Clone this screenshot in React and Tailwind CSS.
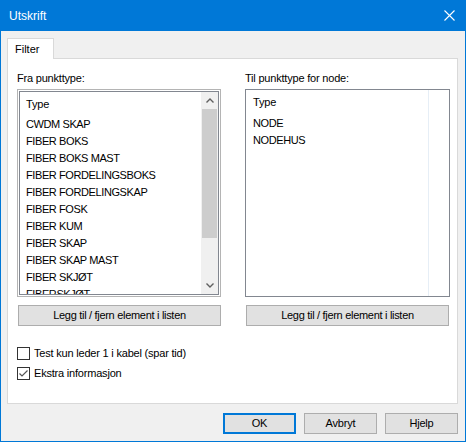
import React from 'react';

const fraTyper = [
  'CWDM SKAP',
  'FIBER BOKS',
  'FIBER BOKS MAST',
  'FIBER FORDELINGSBOKS',
  'FIBER FORDELINGSKAP',
  'FIBER FOSK',
  'FIBER KUM',
  'FIBER SKAP',
  'FIBER SKAP MAST',
  'FIBER SKJØT',
  'FIBERSKJØT',
];

const tilTyper = ['NODE', 'NODEHUS'];

function Knapp({ children, primary }) {
  return (
    <button
      className={`h-[21px] w-[73px] bg-[#e1e1e1] text-[11px] tracking-[-0.2px] text-black ${
        primary ? 'border-2 border-[#0078d7]' : 'border border-[#adadad]'
      }`}
    >
      {children}
    </button>
  );
}

function Avkrysning({ checked, children }) {
  return (
    <label className="flex h-[13px] items-center gap-[4px]">
      <span className="flex h-[13px] w-[13px] items-center justify-center border border-[#333333] bg-white">
        {checked && (
          <svg width="11" height="11" viewBox="0 0 11 11">
            <path d="M1.5 5.5 L4 8 L9.5 2.5" fill="none" stroke="#555" strokeWidth="1.2" />
          </svg>
        )}
      </span>
      <span className="text-[11px] tracking-[-0.2px] text-black">{children}</span>
    </label>
  );
}

export default function App() {
  return (
    <div className="flex h-[442px] w-[466px] flex-col bg-[#0078d7] px-px pb-px font-['Liberation_Sans',Arial,sans-serif]">
      {/* Tittellinje */}
      <div className="flex h-[31px] shrink-0 items-center justify-between pl-[8px] pr-[10px]">
        <span className="text-[12px] text-white">Utskrift</span>
        <svg width="11" height="11" viewBox="0 0 11 11">
          <path d="M0.5 0.5 L10.5 10.5 M10.5 0.5 L0.5 10.5" stroke="#fff" strokeWidth="1.1" />
        </svg>
      </div>

      <div className="flex flex-1 flex-col bg-[#f0f0f0] pl-[6px] pt-[7px]">
        {/* Fane */}
        <div className="relative z-10 -mb-px flex h-[21px] w-[47px] items-center border-x border-t border-[#d9d9d9] bg-white pl-[7px] text-[11px] text-black">
          Filter
        </div>

        <div className="flex h-[346px] w-[451px] flex-col border border-[#d9d9d9] bg-white pl-[9px] pt-[12px]">
          <div className="flex gap-[24px]">
            {/* Fra punkttype */}
            <div className="flex w-[204px] flex-col">
              <div className="h-[14px] text-[11px] leading-[14px] tracking-[-0.2px] text-black">Fra punkttype:</div>
              <div className="mt-[4px] h-[208px] border border-[#b4b4b4] p-px">
                <div className="flex h-full border border-[#828790] bg-white">
                  <div className="flex-1 overflow-hidden">
                    <div className="flex h-[24px] items-center pl-[6px] text-[11px] tracking-[-0.2px] text-black">Type</div>
                    {fraTyper.map((t) => (
                      <div key={t} className="flex h-[17px] items-center whitespace-nowrap pl-[6px] text-[11px] tracking-[-0.4px] text-black">
                        {t}
                      </div>
                    ))}
                  </div>
                  <div className="flex w-[17px] flex-col bg-[#f0f0f0]">
                    <div className="flex h-[17px] items-center justify-center">
                      <svg width="8" height="5" viewBox="0 0 8 5">
                        <path d="M0.5 4.5 L4 1 L7.5 4.5" fill="none" stroke="#606060" strokeWidth="1.4" />
                      </svg>
                    </div>
                    <div className="mx-px h-[129px] bg-[#cdcdcd]" />
                    <div className="flex-1" />
                    <div className="flex h-[17px] items-center justify-center">
                      <svg width="8" height="5" viewBox="0 0 8 5">
                        <path d="M0.5 0.5 L4 4 L7.5 0.5" fill="none" stroke="#606060" strokeWidth="1.4" />
                      </svg>
                    </div>
                  </div>
                </div>
              </div>
              <button className="ml-px mt-[8px] h-[21px] w-[203px] border border-[#adadad] bg-[#e1e1e1] text-[11px] tracking-[-0.3px] text-black">
                Legg til / fjern element i listen
              </button>
            </div>

            {/* Til punkttype */}
            <div className="flex w-[205px] flex-col">
              <div className="h-[14px] text-[11px] leading-[14px] tracking-[-0.2px] text-black">Til punkttype for node:</div>
              <div className="mt-[4px] flex h-[208px] border border-[#828790] bg-white">
                <div className="w-[183px] border-r border-[#e6eef6]">
                  <div className="flex h-[25px] items-center pl-[7px] text-[11px] tracking-[-0.2px] text-black">Type</div>
                  {tilTyper.map((t) => (
                    <div key={t} className="flex h-[17px] items-center pl-[7px] text-[11px] tracking-[-0.4px] text-black">
                      {t}
                    </div>
                  ))}
                </div>
              </div>
              <button className="ml-px mt-[8px] h-[21px] w-[203px] border border-[#adadad] bg-[#e1e1e1] text-[11px] tracking-[-0.3px] text-black">
                Legg til / fjern element i listen
              </button>
            </div>
          </div>

          <div className="mt-[21px] flex flex-col gap-[7px]">
            <Avkrysning>Test kun leder 1 i kabel (spar tid)</Avkrysning>
            <Avkrysning checked>Ekstra informasjon</Avkrysning>
          </div>
        </div>

        <div className="mt-[9px] flex w-[451px] justify-end gap-[8px]">
          <Knapp primary>OK</Knapp>
          <Knapp>Avbryt</Knapp>
          <Knapp>Hjelp</Knapp>
        </div>
      </div>
    </div>
  );
}
